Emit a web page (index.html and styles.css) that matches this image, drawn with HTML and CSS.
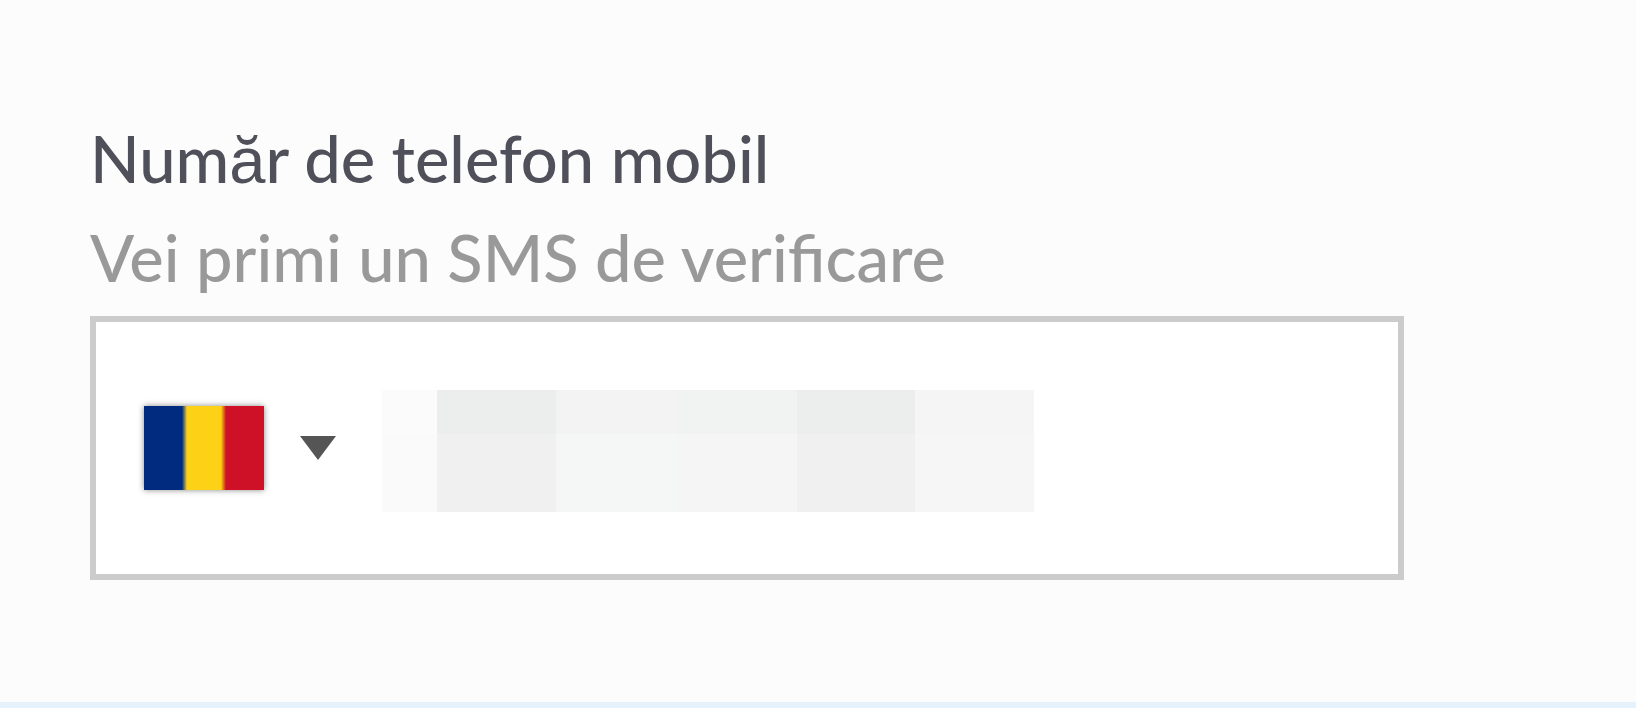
FILE: index.html
```html
<!DOCTYPE html>
<html lang="ro">
<head>
    <meta charset="UTF-8">
    <meta name="viewport" content="width=device-width, initial-scale=1.0">
    <title>Număr de telefon mobil</title>
    <link rel="stylesheet" href="styles.css">
</head>
<body>
    <main class="section">
        <form class="phone-form">
            <label class="label" for="phone">Num<span class="fallback">ă</span>r de telefon mobil</label>
            <p class="hint" id="phone-hint">Vei primi un SMS de verificare</p>

            <div class="phone-box">
                <button class="country" type="button" aria-label="România">
                    <span class="flag"></span>
                    <svg class="arrow" viewBox="0 0 36 24" aria-hidden="true">
                        <path d="M0 0H36L18 24Z" fill="#555"/>
                    </svg>
                </button>
                <div class="number">
                    <input class="number-input" type="tel" id="phone" aria-describedby="phone-hint">
                    <!-- hides the digits of the number -->
                    <svg class="mask" viewBox="0 0 652 122" aria-hidden="true">
                        <rect width="56" height="44" fill="#fbfbfb"/>
                        <rect x="55" width="120" height="44" fill="#ebeeed"/>
                        <rect x="174" width="122" height="44" fill="#f3f3f3"/>
                        <rect x="295" width="121" height="44" fill="#f1f3f2"/>
                        <rect x="415" width="119" height="44" fill="#eceeed"/>
                        <rect x="533" width="119" height="44" fill="#f5f5f5"/>
                        <rect y="44" width="56" height="78" fill="#fafafa"/>
                        <rect x="55" y="44" width="120" height="78" fill="#f0f0f0"/>
                        <rect x="174" y="44" width="122" height="78" fill="#f5f7f6"/>
                        <rect x="295" y="44" width="121" height="78" fill="#f5f5f5"/>
                        <rect x="415" y="44" width="119" height="78" fill="#f0f0f0"/>
                        <rect x="533" y="44" width="119" height="78" fill="#f6f6f6"/>
                    </svg>
                </div>
            </div>
        </form>
    </main>
    <div class="divider"></div>
</body>
</html>
```

FILE: styles.css
```css
* {
    margin: 0;
    padding: 0;
    box-sizing: border-box;
}

body {
    font-family: Lato, sans-serif;
    font-size: 65px;
    font-weight: 500;
    line-height: 99px;
    background: #fcfcfc;
    min-height: 100vh;
    display: flex;
    flex-direction: column;
}

.section {
    flex: 1;
    padding: 109px 232px 0 90px;
}

.label {
    display: block;
    color: #50505a;
}

.fallback {
    font-family: "Liberation Sans", sans-serif;
    line-height: 1;
}

.hint {
    color: #999;
    margin-bottom: 9px;
}

.phone-box {
    display: flex;
    align-items: center;
    gap: 46px;
    padding: 62px 48px;
    background: #fff;
    border: 6px solid #ccc;
}

.country {
    display: flex;
    align-items: center;
    gap: 36px;
    background: none;
    border: none;
    cursor: pointer;
}

.flag {
    width: 120px;
    height: 84px;
    background: linear-gradient(to right, #002b7f 38px, #fcd116 43px, #fcd116 77px, #ce1126 82px);
    box-shadow: 0 0 6px #888;
}

.arrow {
    width: 36px;
    height: 24px;
}

.number {
    flex: 1;
    display: grid;
    padding-top: 6px;
}

.number-input,
.mask {
    grid-area: 1 / 1;
}

.number-input {
    width: 100%;
    height: 122px;
    font: inherit;
    color: #50505a;
    background: none;
    border: none;
    outline: none;
}

.mask {
    width: 652px;
    max-width: 100%;
    pointer-events: none;
}

.divider {
    height: 6px;
    background: #e6f2fb;
}
```
